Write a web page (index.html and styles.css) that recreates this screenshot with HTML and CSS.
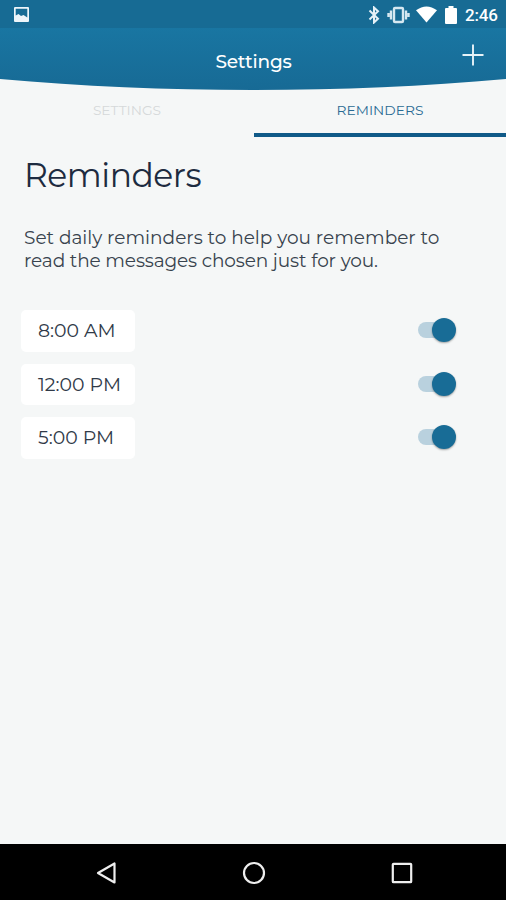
FILE: index.html
```html
<!DOCTYPE html>
<html lang="en">
<head>
<meta charset="utf-8">
<title>Settings</title>
<link rel="stylesheet" href="styles.css">
</head>
<body>
<div class="screen">
  <header class="header">
    <svg class="curve" viewBox="0 0 506 91" aria-hidden="true">
      <defs><linearGradient id="blue" x1="0" y1="0" x2="0" y2="1"><stop offset=".3" stop-color="#1976a2"/><stop offset="1" stop-color="#176a95"/></linearGradient></defs>
      <path d="M0 0H506V79C425 86.300 340 90 253 90S81 86.300 0 79Z" fill="url(#blue)"/>
    </svg>
    <div class="statusbar">
      <svg class="photo" viewBox="0 0 15 15"><path fill-rule="evenodd" d="M1 0H14Q15 0 15 1V14Q15 15 14 15H1Q0 15 0 14V1Q0 0 1 0ZM1.700 1.700V8.500L4.500 7 7 9 9.500 8 13.300 10.500V1.700Z"/></svg>
      <div class="indicators">
        <svg class="bluetooth" viewBox="0 0 12 18"><path d="M1.500 4.500L10 12.700 6 16.500V1.500L10 5.300 1.500 13.500"/></svg>
        <svg class="vibrate" viewBox="0 0 23 18"><rect x="7" y="2" width="9" height="14" rx="1"/><path d="M4 4.500V13.500M1.500 7V11M19 4.500V13.500M21.500 7V11"/></svg>
        <svg class="wifi" viewBox="0 0 22 17"><path d="M0 4Q11-4 22 4L11 17Z"/></svg>
        <svg class="battery" viewBox="0 0 12 18"><path d="M3.500 0H8.500V2H11Q12 2 12 3V17Q12 18 11 18H1Q0 18 0 17V3Q0 2 1 2H3.500Z"/></svg>
        <span class="clock">2:46</span>
      </div>
    </div>
    <div class="titlebar">
      <h1 class="title">Settings</h1>
      <svg class="add" viewBox="0 0 22 22"><path d="M11 .5V21.500M.5 11H21.500"/></svg>
    </div>
  </header>
  <nav class="tabs">
    <div class="tab">SETTINGS</div>
    <div class="tab active">REMINDERS</div>
  </nav>
  <main class="content">
    <h2 class="heading">Reminders</h2>
    <p class="intro">Set daily reminders to help you remember to<br><span class="second">read the messages chosen just for you.</span></p>
    <ul class="list">
      <li class="row"><div class="time">8:00 AM</div><div class="switch"></div></li>
      <li class="row"><div class="time">12:00 PM</div><div class="switch"></div></li>
      <li class="row"><div class="time">5:00 PM</div><div class="switch"></div></li>
    </ul>
  </main>
  <footer class="navbar">
    <svg viewBox="0 0 24 24"><path d="M20.500 2.500V21.500L4 12Z"/></svg>
    <svg viewBox="0 0 24 24"><circle cx="12" cy="12" r="10"/></svg>
    <svg viewBox="0 0 24 24"><rect x="2.800" y="2.800" width="18.400" height="18.400" rx=".8"/></svg>
  </footer>
</div>
</body>
</html>
```
FILE: styles.css
```css
* { box-sizing: border-box; }
body { margin: 0; }
h1, h2, p, ul { margin: 0; padding: 0; font-weight: 400; }
svg { display: block; flex: none; }

.screen {
  width: 506px;
  height: 900px;
  display: flex;
  flex-direction: column;
  overflow: hidden;
  background: #f5f7f7;
  color: #1d2b40;
  font-family: Montserrat, Inter, sans-serif;
}
.header { position: relative; height: 90px; flex: none; color: #fff; }
.curve { position: absolute; left: 0; top: 0; width: 506px; height: 91px; }
.statusbar {
  position: relative;
  height: 28px;
  display: flex;
  justify-content: space-between;
  align-items: center;
  padding: 1px 9px 0 14px;
  background: #176b94;
}
.photo { width: 15px; height: 15px; fill: #edf5fa; }
.indicators { display: flex; align-items: center; }
.bluetooth { width: 12px; height: 18px; margin-right: 7px; fill: none; stroke: #e5f1f7; stroke-width: 2; }
.vibrate { width: 23px; height: 18px; margin-right: 6px; fill: none; stroke: #d6e8f1; stroke-width: 2.4; }
.wifi { width: 21px; height: 17px; margin-right: 8px; fill: #fff; }
.battery { width: 12px; height: 18px; margin-right: 8px; fill: #fff; }
.clock { width: 32px; font: 500 17px/20px Roboto, sans-serif; letter-spacing: -.2px; white-space: nowrap; }
.titlebar { position: relative; height: 62px; display: flex; justify-content: center; padding: 22px 0 0 1px; }
.title { font-size: 18.500px; line-height: 24px; font-weight: 500; letter-spacing: -.2px; }
.add { position: absolute; right: 22px; top: 16px; width: 22px; height: 22px; stroke: #e7f3f8; stroke-width: 1.900; }

.tabs { display: grid; grid-template-columns: 254px 1fr; height: 47px; flex: none; }
.tab { height: 47px; padding-top: 11px; text-align: center; font-size: 13.800px; line-height: 18px; color: #d5d9da; }
.active { color: #286a93; border-bottom: 4px solid #105a88; }

.content { flex: 1; padding: 14px 50px 0 21px; }
.heading { margin-left: 3px; font-size: 33px; line-height: 48px; letter-spacing: -.5px; }
.intro { margin: 27px 0 0 3px; font-size: 18.500px; line-height: 23px; white-space: nowrap; color: #38434e; }
.second { letter-spacing: -.12px; }
.list { display: grid; gap: 12px; margin-top: 38px; list-style: none; }
.row { display: flex; align-items: center; justify-content: space-between; height: 41.500px; }
.time { width: 114px; height: 41.500px; padding-left: 17px; border-radius: 5px; background: #fff; font-size: 18.900px; line-height: 42px; white-space: nowrap; color: #303a48; }
.switch { position: relative; width: 38px; height: 24px; margin-bottom: 1px; }
.switch::before { content: ""; position: absolute; left: 0; top: 4px; width: 34px; height: 16px; border-radius: 8px; background: #b9d1de; }
.switch::after { content: ""; position: absolute; right: 0; top: 0; width: 24px; height: 24px; border-radius: 50%; background: #186c96; box-shadow: 0 1px 2px rgba(0, 0, 0, .35); }

.navbar { height: 56px; flex: none; display: flex; justify-content: center; align-items: center; gap: 124px; padding: 2px 0 0 1px; background: #000; }
.navbar svg { width: 24px; height: 24px; fill: none; stroke: #eee; stroke-width: 2.200; stroke-linejoin: round; }
```
